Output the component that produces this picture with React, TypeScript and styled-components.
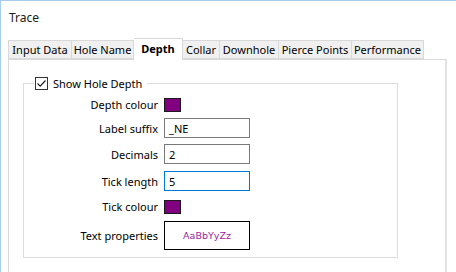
import styled, { createGlobalStyle } from "styled-components";

const GlobalStyle = createGlobalStyle`
  html, body {
    margin: 0;
    padding: 0;
    background: #ffffff;
    overflow: hidden;
  }
  body {
    font-family: "Noto Sans", "Open Sans", sans-serif;
    font-size: 11px;
    color: #000000;
  }
`;

type TabInfo = { label: string; width: number };

const tabs: TabInfo[] = [
  { label: "Input Data", width: 64 },
  { label: "Hole Name", width: 62 },
  { label: "Depth", width: 49 },
  { label: "Collar", width: 37 },
  { label: "Downhole", width: 59 },
  { label: "Pierce Points", width: 73 },
  { label: "Performance", width: 72 },
];

const App = () => {
  return (
    <>
      <GlobalStyle />
      <Window>
        <Title>Trace</Title>
        <TabStrip>
          {tabs.map((t) => (
            <Tab key={t.label} $w={t.width} $active={t.label === "Depth"}>
              {t.label}
            </Tab>
          ))}
        </TabStrip>
        <Panel>
          <GroupBox>
            <Legend>
              <CheckBox>
                <svg width="11" height="11" viewBox="0 0 11 11">
                  <path d="M1.5 5.5 L4.2 8.2 L9.5 2.5" fill="none" stroke="#222" strokeWidth="1.2" />
                </svg>
              </CheckBox>
              Show Hole Depth
            </Legend>
            <Form>
              <Row $mt={13}>
                <Label>Depth colour</Label>
                <Swatch />
              </Row>
              <Row $mt={6}>
                <Label>Label suffix</Label>
                <Input>_NE</Input>
              </Row>
              <Row $mt={6}>
                <Label>Decimals</Label>
                <Input>2</Input>
              </Row>
              <Row $mt={7}>
                <Label>Tick length</Label>
                <Input $focused>5</Input>
              </Row>
              <Row $mt={8}>
                <Label>Tick colour</Label>
                <Swatch />
              </Row>
              <Row $mt={7}>
                <Label>Text properties</Label>
                <FontPreview>AaBbYyZz</FontPreview>
              </Row>
            </Form>
          </GroupBox>
        </Panel>
      </Window>
    </>
  );
};

const Window = styled.div`
  height: 272px;
  box-sizing: border-box;
  border-top: 1px solid #a8cdec;
  border-left: 1px solid #a8cdec;
  display: flex;
  flex-direction: column;
`;

const Title = styled.div`
  font-size: 12px;
  padding: 8px 0 0 8px;
  height: 29px;
  color: #1a1a1a;
`;

const TabStrip = styled.div`
  display: flex;
  align-items: flex-end;
  margin-left: 7px;
  height: 21px;
  position: relative;
  z-index: 1;
`;

const Tab = styled.div<{ $w: number; $active?: boolean }>`
  box-sizing: border-box;
  width: ${({ $w }) => $w}px;
  height: ${({ $active }) => ($active ? 22 : 19)}px;
  margin-bottom: ${({ $active }) => ($active ? -1 : 0)}px;
  display: flex;
  align-items: center;
  justify-content: center;
  padding-bottom: ${({ $active }) => ($active ? 2 : 0)}px;
  background: ${({ $active }) => ($active ? "#ffffff" : "#f0f0f0")};
  border: 1px solid #d9d9d9;
  border-bottom: ${({ $active }) => ($active ? "none" : "1px solid #d9d9d9")};
  font-weight: ${({ $active }) => ($active ? 700 : 400)};
  white-space: nowrap;
  & + & {
    border-left: none;
  }
`;

const Panel = styled.div`
  flex: 1;
  margin-left: 7px;
  width: 439px;
  box-sizing: border-box;
  border: 1px solid #d9d9d9;
  border-right: 2px solid #e3e3e3;
  border-bottom: none;
  background: #ffffff;
  padding: 23px 0 0 14px;
`;

const GroupBox = styled.div`
  position: relative;
  width: 375px;
  height: 175px;
  box-sizing: border-box;
  border: 1px solid #dcdcdc;
`;

const Legend = styled.div`
  position: absolute;
  top: -8px;
  left: 10px;
  display: flex;
  align-items: center;
  gap: 5px;
  padding: 0 5px 0 1px;
  background: #ffffff;
  font-size: 11px;
  line-height: 15px;
`;

const CheckBox = styled.span`
  width: 13px;
  height: 13px;
  box-sizing: border-box;
  border: 1px solid #333333;
  display: flex;
  align-items: center;
  justify-content: center;
  background: #ffffff;
`;

const Form = styled.div`
  display: flex;
  flex-direction: column;
`;

const Row = styled.div<{ $mt: number }>`
  display: flex;
  align-items: center;
  gap: 6px;
  margin-top: ${({ $mt }) => $mt}px;
`;

const Label = styled.div`
  width: 134px;
  text-align: right;
  white-space: nowrap;
`;

const Swatch = styled.div`
  width: 17px;
  height: 14px;
  box-sizing: border-box;
  background: #800080;
  border: 1px solid #1a1a1a;
`;

const Input = styled.div<{ $focused?: boolean }>`
  width: 86px;
  height: 20px;
  box-sizing: border-box;
  border: 1px solid ${({ $focused }) => ($focused ? "#0078d7" : "#7a7a7a")};
  padding-left: 4px;
  display: flex;
  align-items: center;
`;

const FontPreview = styled.div`
  width: 86px;
  height: 29px;
  box-sizing: border-box;
  border: 1px solid #000000;
  display: flex;
  align-items: center;
  justify-content: center;
  font-family: "DejaVu Sans", sans-serif;
  font-size: 9.5px;
  color: #9a1ea0;
`;

export default App;
